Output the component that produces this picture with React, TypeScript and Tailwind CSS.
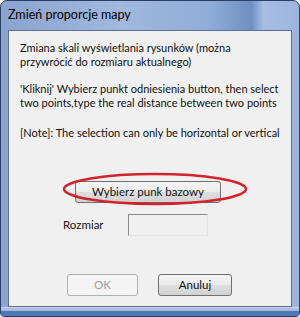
import React from "react";

export default function App() {
  const font = { fontFamily: 'Lato, "Liberation Sans", sans-serif' };
  const btn =
    "h-[22px] border border-[#707070] rounded-[3px] bg-[linear-gradient(180deg,#f4f4f4_0%,#ececec_48%,#dedede_52%,#d2d2d2_100%)] text-[11.5px] text-[#111] whitespace-nowrap";
  return (
    <div className="w-[300px] h-[317px] bg-white" style={font}>
      <div className="w-[300px] h-[317px] rounded-t-[7px] rounded-b-[4px] border border-[#2a3f66] bg-[linear-gradient(90deg,#8aa3cf_0%,#a2b8de_40%,#90acd9_70%,#6f8fc2_84%,#a8bde2_88%,#9db5df_100%)] flex flex-col">
        <div className="h-[29px] shrink-0 flex items-center pl-[7px] text-[12.5px] text-black">
          Zmień proporcje mapy
        </div>
        <div className="h-[277px] shrink-0 mx-[7px] border border-[#5d6f8f] bg-[#f0f0f0] flex flex-col whitespace-nowrap">
          <div className="pt-[10px] pl-[11px] text-[11px] leading-[14px] text-[#111]">
            <p>Zmiana skali wyświetlania rysunków (można</p>
            <p>przywrócić do rozmiaru aktualnego)</p>
            <p className="mt-[13px]">'Kliknij' Wybierz punkt odniesienia button, then select</p>
            <p>two points,type the real distance between two points</p>
            <p className="mt-[16px]">[Note]: The selection can only be horizontal or vertical</p>
          </div>
          <div className="mt-[38px] ml-[66px] relative w-[146px] h-[22px]">
            <button className={`${btn} w-[146px]`}>Wybierz punk bazowy</button>
            <svg className="absolute left-[-14px] top-[-7px] pointer-events-none" width="188" height="36" viewBox="0 0 188 36">
              <ellipse cx="94" cy="18" rx="91" ry="15" fill="none" stroke="#d2232c" strokeWidth="2.5" />
            </svg>
          </div>
          <div className="mt-[14px] flex items-center">
            <span className="ml-[54px] text-[11.5px] text-[#111] w-[65px]">Rozmiar</span>
            <div className="w-[80px] h-[22px] border border-t-[#8a8a8a] border-l-[#8a8a8a] border-b-[#e3e3e3] border-r-[#e3e3e3] bg-[#f0f0f0]" />
          </div>
          <div className="mt-[38px] ml-[58px] flex gap-[20px]">
            <button className="w-[71px] h-[22px] border border-[#adb2b5] rounded-[3px] bg-[#f4f4f4] text-[11.5px] text-[#a0a0a0]">OK</button>
            <button className={`${btn} w-[74px]`}>Anuluj</button>
          </div>
        </div>
        <div className="flex-1 border-t border-[#c9d6ea] bg-[linear-gradient(180deg,#aebfdc_0%,#aebfdc_30%,#4f78b8_40%,#4f78b8_100%)]" />
      </div>
    </div>
  );
}
